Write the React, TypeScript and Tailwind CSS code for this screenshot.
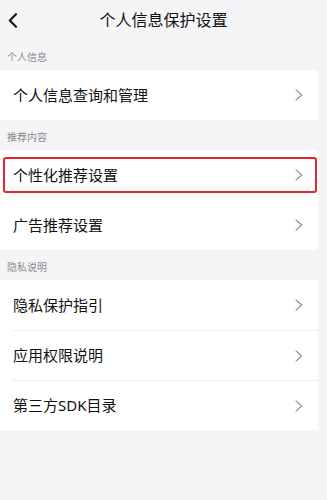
type Row = { label: string; highlight?: boolean };

const sections: { title: string; rows: Row[]; divided?: boolean }[] = [
  { title: '个人信息', rows: [{ label: '个人信息查询和管理' }] },
  {
    title: '推荐内容',
    rows: [{ label: '个性化推荐设置', highlight: true }, { label: '广告推荐设置' }],
  },
  {
    title: '隐私说明',
    divided: true,
    rows: [{ label: '隐私保护指引' }, { label: '应用权限说明' }, { label: '第三方SDK目录' }],
  },
];

const Chevron = () => (
  <svg width="8" height="12" viewBox="0 0 8 12" fill="none">
    <polyline points="1,0.8 6.6,6 1,11.2" stroke="#8e8e93" strokeWidth="1.1" strokeLinecap="round" strokeLinejoin="round" />
  </svg>
);

const App = () => {
  return (
    <div
      className="min-h-[500px] w-[327px] bg-[#f5f5f7] text-[#111111]"
      style={{ fontFamily: '"Noto Sans", "Noto Sans CJK SC", sans-serif' }}
    >
      <div className="grid h-[40px] grid-cols-[40px_1fr_40px] items-center">
        <div className="pl-[8px]">
          <svg width="10" height="15" viewBox="0 0 10 15" fill="none">
            <polyline points="8,1.2 1.8,7.5 8,13.8" stroke="#111" strokeWidth="2.1" strokeLinecap="round" strokeLinejoin="round" />
          </svg>
        </div>
        <h1 className="text-center text-[16px] leading-none">个人信息保护设置</h1>
        <div />
      </div>

      {sections.map((section) => (
        <div key={section.title}>
          <div className="flex h-[30px] items-center pl-[7px] pt-[4px] text-[10px] leading-none text-[#8a8a8f]">
            {section.title}
          </div>
          <div className="w-[318px] bg-white">
            {section.rows.map((row, idx) => (
              <div key={row.label} className="relative pl-[12px]">
                {row.highlight && (
                  <div className="absolute left-[3px] right-[1px] top-[7px] bottom-[7px] rounded-[3px] border-2 border-[#e3262b]" />
                )}
                <div
                  className={`flex h-[50px] items-center pl-px pr-[15px] ${
                    section.divided && idx > 0 ? 'border-t border-[#efeff1]' : ''
                  }`}
                >
                  <span className="flex-1 text-[15px] leading-none">{row.label}</span>
                  <Chevron />
                </div>
              </div>
            ))}
          </div>
        </div>
      ))}
    </div>
  );
};

export default App;
